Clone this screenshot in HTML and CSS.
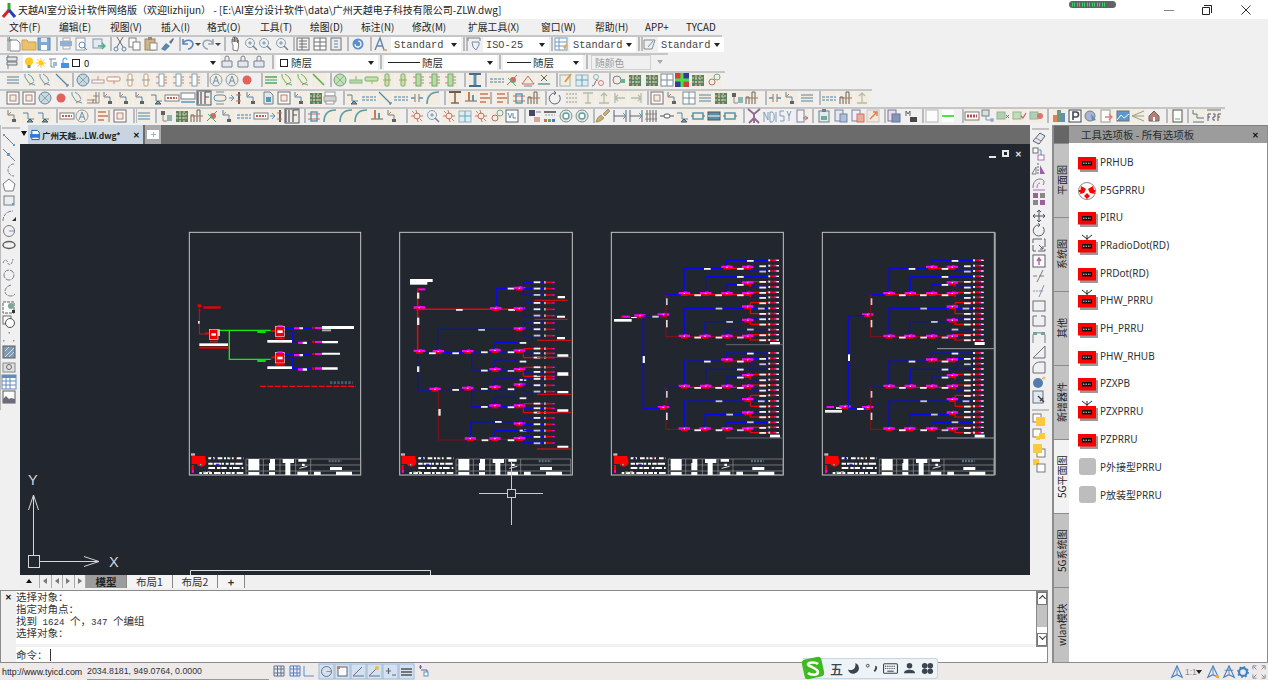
FILE: index.html
```html
<!DOCTYPE html>
<html lang="zh">
<head>
<meta charset="utf-8">
<title>天越AI室分设计软件网络版</title>
<link rel="stylesheet" href="styles.css">
</head>
<body>
<svg class="defs" aria-hidden="true">
<defs>
<rect id="T" x="-7" y="-7" width="14" height="14" fill="#f3eddd"/>
<path id="s" d="M0-7V7" stroke="#a0a0a0" stroke-width="1.6"/>
<g id="new" fill="none"><path d="M-4-4h7l3 3v8h-10z" fill="#fff" stroke="#707070"/><path d="M-7-4h5M-4.500-7v5" stroke="#2c9a78"/></g>
<path id="open" d="M-7-4h5l1 2h8v8h-14z" fill="#eab94e" stroke="#bf9232"/>
<g id="save"><rect x="-6" y="-6" width="12" height="12" fill="#6b9bcb" stroke="#40709f"/><rect x="-3" y="-6" width="6" height="4" fill="#e0ebf4"/><rect x="-3" y="1" width="6" height="5" fill="#fff"/></g>
<g id="print"><rect x="-3" y="-6" width="7" height="3" fill="#fff" stroke="#999"/><rect x="-6" y="-3" width="12" height="5" fill="#7aa5cf"/><rect x="-3" y="2" width="7" height="3" fill="#fff" stroke="#999"/></g>
<g id="prev" fill="none"><rect x="-5" y="-6" width="9" height="12" fill="#fff" stroke="#7a8a9a"/><circle cx="1" cy="1" r="3" stroke="#4a7ea8"/><path d="M3 3l3 3" stroke="#4a7ea8"/></g>
<g id="pub" fill="none"><rect x="-6" y="-5" width="9" height="9" fill="#dfe8f0" stroke="#6a8aa8"/><path d="M-1 2h6M3-1l3 3-3 3" stroke="#2c9a78" stroke-width="1.400"/></g>
<g id="cut" fill="none" stroke="#4a4a5a"><path d="M-3-7L3 3M3-7L-3 3"/><circle cx="-4" cy="5" r="2" stroke="#3a6f9f"/><circle cx="4" cy="5" r="2" stroke="#3a6f9f"/></g>
<g id="copy" fill="#fff" stroke="#666"><rect x="-6" y="-6" width="7" height="9"/><rect x="-2" y="-2" width="7" height="8"/></g>
<g id="paste"><rect x="-6" y="-5" width="10" height="11" fill="#c9a66a" stroke="#8a7040"/><rect x="-3" y="-7" width="4" height="3" fill="#777"/><rect x="-1" y="-1" width="7" height="7" fill="#fff" stroke="#777"/></g>
<g id="brush"><path d="M-6 5l5-6 4 3-5 5z" fill="#3a6f9f"/><path d="M2-2l4-4 1 1-3 5z" fill="#556"/></g>
<g id="undo" fill="none" stroke="#3a6fb0" stroke-width="1.600"><path d="M-5-5v5h5M-5 0c2-5 9-5 10 0 0 3-3 5-5 5"/></g>
<g id="redo" fill="none" stroke="#8a98a8" stroke-width="1.600"><path d="M5-5v5h-5M5 0c-2-5-9-5-10 0 0 3 3 5 5 5"/></g>
<path id="dd" d="M-3-1h6l-3 3z" fill="#222"/>
<path id="pan" d="M-3 6v-5l-1-2v-4h1v3-5h1.500v5-5h1.500v5-4h1.500v5-3h1v7l-1 4z" fill="#fff" stroke="#444" stroke-width=".8"/>
<g id="zm" fill="none" stroke="#7a8a98"><circle cx="-1" cy="-1" r="4.500"/><path d="M2 2l4 4" stroke="#5a6a78" stroke-width="1.500"/><path d="M-3-1h4M-1-3v4" stroke="#4a88b8"/></g>
<g id="pr1"><rect x="-6" y="-6" width="12" height="12" fill="#f4f4f4" stroke="#555"/><path d="M-4-3h8M-4 0h8M-4 3h8M-1-6v12" stroke="#555" fill="none"/></g>
<g id="pr2"><rect x="-6" y="-6" width="12" height="12" fill="#fff" stroke="#555"/><path d="M-6-2h12M0-6v12M-6 2h12" stroke="#555" fill="none"/></g>
<g id="pr3"><rect x="-5" y="-6" width="10" height="12" fill="#eee" stroke="#555"/><path d="M-2-3h4M-2 0h4M-2 3h4" stroke="#3a6f9f" fill="none"/></g>
<g id="help"><circle r="5.500" fill="#3d7cc4"/><circle r="3" fill="none" stroke="#fff" stroke-width="1.200" stroke-dasharray="9 5"/><rect x="-.600" y="2.500" width="1.200" height="1.500" fill="#fff"/></g>
<g id="tstyle" fill="none" stroke="#4b6f96" stroke-width="1.400"><path d="M-6 6L-1-6 3 6M-4 2h6"/><path d="M2 6h4" stroke="#c09040"/></g>
<g id="dimst" fill="none" stroke="#4a7fa8"><path d="M-6-6h12M-6-6v3M6-6v3" stroke="#666"/><path d="M-2-2h7v3l-3 5-3-3z" stroke="#5a78a0"/></g>
<g id="tabst" fill="#fff"><rect x="-6" y="-6" width="12" height="12" stroke="#5a88b8"/><path d="M-6-2h12M-6 2h12M-2-6v12" stroke="#5a88b8" fill="none"/><path d="M2 3l4-4v3l-2 4z" fill="#d4a040"/></g>
<g id="mlst" fill="none" stroke="#777"><path d="M-6-4h11l-3 9h-8z"/><path d="M-2 3l5-6" stroke="#4a7fa8"/></g>
<path id="layer" d="M-6-5h10v4h-10zM-6 0h10v3h-10z" fill="#dfe6ec" stroke="#555"/>
<g id="ltool"><path d="M-5 5V-1h10v6z" fill="#dde7f0" stroke="#667"/><path d="M-2-1v-3a2 2 0 0 1 4 0v3" fill="none" stroke="#667"/></g>

<g id="lin" fill="none"><use href="#T"/><path d="M-6-3h12M-6 0h12M-6 3h12" stroke="#2c6f9c" stroke-width="1.200"/></g>
<g id="ling" fill="none"><use href="#T"/><path d="M-6-3h12M-6 3h12" stroke="#22a22c" stroke-width="1.500"/><path d="M-6 0h12" stroke="#2c6f9c"/></g>
<g id="wav" fill="none"><use href="#T"/><path d="M-5-6v3l4 6 6 2M-2-6l4 3 2 4" stroke="#3e8ba8"/><path d="M-1 5l5-3" stroke="#777"/></g>
<g id="wavg" fill="none"><use href="#T"/><path d="M-5-6v3l4 6 6 2M-2-6l4 3 2 4" stroke="#4aa838"/><path d="M-1 5l5-3" stroke="#777"/></g>
<g id="dia" fill="none"><use href="#T"/><path d="M-6-6L5 5" stroke="#2f6f9f" stroke-width="1.300"/><path d="M4 6h2v-2" stroke="#444"/></g>
<g id="diag" fill="none"><use href="#T"/><path d="M-6-6L5 5" stroke="#3aa02c" stroke-width="1.500"/></g>
<g id="cir" fill="#b6dadb" stroke="#668"><circle r="6"/><path d="M-4-4L4 4M-4 4L4-4" fill="none" stroke="#88a"/></g>
<g id="cirg" fill="#b8e0a8" stroke="#686"><circle r="6"/><path d="M-4-4L4 4M-4 4L4-4" fill="none" stroke="#6a8"/></g>
<g id="ph"><use href="#T"/><rect x="-6" y="0" width="12" height="3" fill="#fff" stroke="#a88"/><path d="M0-4V0" stroke="#a88"/></g>
<g id="pw"><use href="#T"/><rect x="-7" y="-3" width="13" height="4" rx="1" fill="#fff" stroke="#c07a5a"/><path d="M0 1v3" stroke="#68a"/></g>
<g id="pv"><use href="#T"/><rect x="-2" y="-6" width="4" height="12" rx="1" fill="#fff" stroke="#c08a5a"/><path d="M-4 0h8" stroke="#789"/></g>
<g id="pp"><use href="#T"/><rect x="-3" y="-6" width="5" height="12" fill="#fff" stroke="#6a94a8"/><path d="M-6-3h3M-6 3h3M2-3h3M2 0h3M2 3h3" stroke="#c46a5a"/></g>
<g id="phg"><use href="#T"/><rect x="-6" y="0" width="12" height="3" fill="#a8d898" stroke="#7a7"/><path d="M0-4V0" stroke="#7a7"/></g>
<g id="pwg"><use href="#T"/><rect x="-7" y="-3" width="13" height="4" rx="1" fill="#b8e0a0" stroke="#6aa048"/><path d="M0 1v3" stroke="#6a8"/></g>
<g id="pvg"><use href="#T"/><rect x="-2" y="-6" width="4" height="12" rx="1" fill="#b8e0a0" stroke="#6aa048"/><path d="M-4 0h8" stroke="#a85"/></g>
<g id="ppg"><use href="#T"/><rect x="-3" y="-6" width="5" height="12" fill="#a8d898" stroke="#5a9a48"/><path d="M-6-3h3M-6 3h3M2-3h3M2 0h3M2 3h3" stroke="#c46a5a"/></g>
<g id="ac" fill="none"><use href="#T"/><circle r="6" stroke="#7a8ca0"/><path d="M-3 4L0-4 3 4M-2 1h4" stroke="#4a7fa8"/></g>
<circle id="rd" r="4.500" fill="#e0453a"/>
<g id="tee" fill="none"><use href="#T"/><path d="M-6-6h12M-6 6h12" stroke="#22507a" stroke-width="2"/><path d="M0-5V5" stroke="#3b7ca8" stroke-width="3"/></g>
<g id="dsh" fill="none"><use href="#T"/><path d="M-7-1h14M-7 2h14" stroke="#2a6a9a" stroke-width="1.200" stroke-dasharray="3 1"/></g>
<g id="spl" fill="none"><use href="#T"/><path d="M-6 5L4-5" stroke="#666"/><circle cx="0" cy="0" r="3" fill="#c0524a"/><path d="M-5-2l8 8" stroke="#3a7"/></g>
<g id="tri" fill="none"><use href="#T"/><path d="M-6 4L0-4 6 4z" stroke="#c0524a"/><path d="M-4 6h8" stroke="#579"/></g>
<g id="xb" fill="none"><use href="#T"/><path d="M-3-5L3 1M3-5L-3 1" stroke="#444"/><path d="M-6 4h12" stroke="#3a8a9a" stroke-width="1.500"/></g>
<g id="ed" fill="none"><use href="#T"/><rect x="-6" y="-5" width="10" height="11" stroke="#8aa"/><path d="M-1 2L5-6" stroke="#d88a28" stroke-width="2"/></g>
<g id="pg" fill="none"><use href="#T"/><rect x="-6" y="-5" width="12" height="11" fill="#dfeaf2" stroke="#8aa4b8"/><path d="M-6 0h12M0-5v11" stroke="#39a"/></g>
<g id="ch" fill="none" stroke="#555"><circle cx="-2" cy="-3" r="2.500" stroke="#7a9"/><circle cx="3" cy="3" r="2.500" stroke="#c65"/><path d="M-6 6c4 0 2-6 6-6"/></g>
<g id="oo" fill="none"><use href="#T"/><circle cx="-2" cy="0" r="4" stroke="#568"/><rect x="2" y="-1" width="4" height="4" fill="#4a7"/></g>
<g id="gr"><use href="#T"/><rect x="-6" y="-5" width="12" height="11" fill="#3c6a42"/><path d="M-6-2h12M-6 2h12M-2-5v11M2-5v11" stroke="#e0d0a0" stroke-dasharray="2 1"/></g>
<g id="win"><use href="#T"/><rect x="-6" y="-6" width="12" height="12" fill="#fff" stroke="#5a7a8a"/><path d="M-6 0h12M0-6v12" stroke="#5a7a8a"/></g>
<g id="cm"><rect x="-7" y="-7" width="14" height="14" fill="#11118c"/><rect x="-7" y="-7" width="7" height="7" fill="#d01818"/><rect x="0" y="0" width="7" height="7" fill="#d01818"/><path d="M-7 0h14M0-7v14" stroke="#2d2" stroke-width="3"/></g>
<g id="sta" fill="none"><use href="#T"/><path d="M-6 5h12V-6M-6 2h9M0-2h6" stroke="#b06a3a"/><path d="M3-6v11M0 1v4" stroke="#3a6a9a"/></g>
<g id="flo" fill="none"><use href="#T"/><path d="M-5-6v5h6v5" stroke="#3a6a9a"/><rect x="-1" y="3" width="4" height="3" fill="#444"/><path d="M-5-1L-2-4" stroke="#c46a3a"/></g>
<g id="flg" fill="none"><use href="#T"/><path d="M-6-3h5v6h6" stroke="#3a6a9a"/><path d="M-2 6l3-3 3 3z" fill="#3aa0b0" stroke="#333"/></g>
<g id="rb"><use href="#T"/><rect x="-7" y="-3" width="14" height="6" fill="#fff" stroke="#666"/><path d="M-5 0h10" stroke="#c03a2a" stroke-width="2" stroke-dasharray="2 1"/></g>
<g id="sc"><use href="#T"/><rect x="-7" y="-5" width="14" height="6" fill="#fff" stroke="#567"/><path d="M-7 4h14" stroke="#38a" stroke-width="1.500"/></g>
<g id="bf" fill="none" stroke="#334"><use href="#T"/><path d="M-6-6v12M-3-6v12M1-6v12h0M1-6h5M1-1h4" stroke-width="1.200"/></g>
<g id="cap" fill="none"><use href="#T"/><rect x="-6" y="-3" width="12" height="6" rx="3" stroke="#3a7fa8"/><path d="M-4-6h8M-4 6h8" stroke="#777"/></g>
<g id="ar"><use href="#T"/><path d="M-7 0h5M-5-3l3 3-3 3" fill="none" stroke="#3a7fa8"/><path d="M3-6v12" stroke="#444" stroke-width="2"/><path d="M0-3h5M0 3h5" stroke="#c0524a"/></g>
<g id="doc"><use href="#T"/><path d="M-4-6h6l3 3v9h-9z" fill="#d8e8f0" stroke="#666"/><rect x="-2" y="-1" width="5" height="5" fill="#38a"/></g>
<g id="frm"><use href="#T"/><rect x="-6" y="-6" width="12" height="12" fill="#fff" stroke="#555"/><rect x="-3" y="-3" width="6" height="6" fill="#f3eddd" stroke="#a66"/></g>
<g id="st2"><use href="#T"/><path d="M-6 6V-1h3v7M0 6V-6h3v12" fill="none" stroke="#444"/><path d="M-6 0h12" stroke="#a8552a"/></g>
<g id="prn"><rect x="-5" y="-6" width="10" height="4" fill="#fff" stroke="#888"/><rect x="-6" y="-2" width="12" height="6" rx="1" fill="#ccc" stroke="#888"/><rect x="-4" y="3" width="8" height="3" fill="#fff" stroke="#888"/></g>
<g id="bk" fill="none"><use href="#T"/><path d="M-6 0h4M2 0h4" stroke="#3a7fa8" stroke-width="1.500"/><path d="M-2-4v8M2-4v8" stroke="#666"/></g>
<g id="arc" fill="none"><use href="#T"/><path d="M-6 6C-6-2-2-6 6-6" stroke="#3a8a9a" stroke-width="1.600"/></g>
<g id="tb" fill="none"><use href="#T"/><path d="M-6-6h12" stroke="#5a3a2a" stroke-width="2"/><path d="M0-5V5M-4 5h8" stroke="#7a4a2a" stroke-width="1.600"/></g>
<g id="tp" fill="none"><use href="#T"/><path d="M-5-5h10M0-5V5M-3 5h6" stroke="#a4b4a0" stroke-width="1.300"/></g>
<g id="tq" fill="none"><use href="#T"/><path d="M-5 5h10M0-5V5M-3-2l3-3 3 3" stroke="#a4b4a0" stroke-width="1.300"/></g>
<g id="tr1" fill="none"><use href="#T"/><path d="M-5-5V5M-5 0H5M-2-3l-3 3 3 3" stroke="#a4b4a0" stroke-width="1.300"/></g>
<g id="tr2" fill="none"><use href="#T"/><path d="M5-5V5M-5 0H5M2-3l3 3-3 3" stroke="#a4b4a0" stroke-width="1.300"/></g>
<g id="dgr" fill="none"><use href="#T"/><path d="M-6-4h12M-6 0h12M-6 4h12" stroke="#7a8a90" stroke-dasharray="2 1"/></g>
<g id="hb"><use href="#T"/><path d="M-6 3h12" stroke="#444"/><rect x="-3" y="-6" width="2" height="9" fill="#c4603a"/><rect x="1" y="-3" width="2" height="6" fill="#3a8a9a"/></g>
<g id="wh"><use href="#T"/><path d="M-6-4h8M-6 0h10M-6 4h6" stroke="#c4603a" stroke-width="1.300"/><path d="M5-6v12" stroke="#666"/></g>
<g id="sw"><use href="#T"/><path d="M-6-2h12M-6 3h12" stroke="#c0524a"/><rect x="-3" y="-4" width="6" height="9" fill="none" stroke="#3a7fa8" stroke-width="1.400"/></g>
<g id="blk"><use href="#T"/><rect x="-5" y="-5" width="4" height="4" fill="#444"/><rect x="1" y="-1" width="5" height="6" fill="#7aa"/><path d="M-3-1v6h4" fill="none" stroke="#777"/></g>
<g id="rng"><circle r="6" fill="#d8ebe5" stroke="#777"/><circle r="3" fill="#fff" stroke="#4a8a8a" stroke-width="1.400"/></g>
<g id="fan"><use href="#T"/><path d="M-6 0h3M3 0h3M-1-6l1 4M1 6l-1-4" stroke="#a66"/><circle r="3" fill="none" stroke="#c0524a"/><path d="M-5-5l2 2M3 3l2 2" stroke="#3a8"/></g>
<g id="lnk"><use href="#T"/><circle cx="-2" cy="2" r="3" fill="none" stroke="#a55"/><circle cx="3" cy="-3" r="3" fill="none" stroke="#597"/></g>
<g id="vb"><rect x="-6" y="-6" width="12" height="12" fill="#fff" stroke="#445"/><path d="M-4-3l2 5 2-5M1-3v5h3" fill="none" stroke="#3a7fa8"/></g>
<g id="fl1"><rect x="-6" y="-6" width="6" height="6" fill="#224"/><rect x="-1" y="1" width="6" height="5" fill="#c98"/><path d="M1-4h5" stroke="#666"/></g>
<g id="fl2"><rect x="-6" y="-5" width="12" height="2" fill="#555"/><path d="M-5-1h10" stroke="#888" stroke-dasharray="2 1"/><rect x="-6" y="3" width="3" height="3" fill="#c4502a"/><rect x="-2" y="3" width="3" height="3" fill="#2aa048"/><rect x="2" y="3" width="3" height="3" fill="#2a62c4"/></g>
<path id="bro" d="M-7 6c1-4 3-6 5-7l3 3c-2 2-4 4-8 4zM0-2l5-5 2 2-5 5z" fill="#c8a040" stroke="#555" stroke-width=".6"/>
<g id="mk" fill="none" stroke="#445"><path d="M-6-6v12M6-6v12M-6 0h12"/><path d="M3-3l3 3-3 3" stroke="#38a"/></g>
<g id="mkc" fill="none"><path d="M-7 0h4M3 0h4" stroke="#333"/><rect x="-3" y="-2" width="6" height="4" rx="2" fill="#fff" stroke="#333"/></g>
<g id="lad" fill="none"><path d="M-6-2h12M-6 3h12" stroke="#a85"/><path d="M-4-6v12M-1-6v12M2-6v12M5-6v12" stroke="#445"/></g>
<g id="bx" fill="none"><use href="#T"/><rect x="-5" y="-3" width="10" height="6" stroke="#2a7a9a" stroke-width="1.400"/><path d="M-7 0h2M5 0h2" stroke="#444"/></g>
<g id="bxf"><use href="#T"/><rect x="-6" y="-4" width="12" height="8" fill="#3a7aa0" stroke="#333"/><path d="M-6 0h12" stroke="#fff"/></g>
<g id="yy" fill="none" stroke="#a98"><path d="M0-2V7M0-2L-6-7M0-2L6-7M0 2L-5 7M0 2L5 7" stroke="#7a4a7a" stroke-width="1.800"/></g>
<g id="nd"><path d="M-6 6V-4l4 8V-4M0-4v10h2c3 0 3-10 0-10h-2M6-4v10" fill="none" stroke="#6a8ab0"/></g>
<g id="sy"><path d="M-2-5h-4v5h4v5h-4M1-5l2 5 2-5M3 0v5" fill="none" stroke="#6a8ab0"/></g>
<g id="dc"><use href="#T"/><rect x="-5" y="-6" width="7" height="12" fill="#f4f4f4" stroke="#66a"/><path d="M1 2h5M3 0l3 2-3 2" fill="none" stroke="#a54"/></g>
<g id="cp"><use href="#T"/><rect x="-5" y="-5" width="10" height="11" fill="#dceaf2" stroke="#4a6a7a"/><rect x="-2" y="-7" width="4" height="3" fill="#567"/><rect x="-3" y="0" width="6" height="4" fill="#5a9a8a"/></g>
<g id="cp2"><rect x="-6" y="-6" width="8" height="11" fill="#e0e8f0" stroke="#668"/><rect x="-1" y="-2" width="7" height="8" fill="#9ab8d8" stroke="#668"/></g>
<g id="cp3"><rect x="-6" y="-6" width="8" height="11" fill="#eef" stroke="#668"/><rect x="-1" y="-2" width="7" height="8" fill="#e8a088" stroke="#c54"/></g>
<g id="cp4"><rect x="-6" y="-6" width="12" height="12" fill="#eee8d8" stroke="#bbb"/><path d="M-3 3l6-6M0-4h4v4" fill="none" stroke="#e0602a" stroke-width="1.400"/></g>
<g id="cp5"><rect x="-6" y="-6" width="8" height="11" fill="#e8d8ee" stroke="#658"/><rect x="-2" y="-2" width="8" height="8" fill="#68a" stroke="#558"/></g>
<g id="mt"><path d="M-5 0V-5l2 3 2-3v5" fill="none" stroke="#444"/><rect x="-1" y="1" width="7" height="5" fill="#222"/></g>
<rect id="wb" x="-6" y="-6" width="12" height="12" fill="#fff" stroke="#aaa"/>
<g id="gl"><rect x="-6" y="-6" width="12" height="12" fill="#fff"/><path d="M-6 0h12" stroke="#1fe61f" stroke-width="2"/></g>
<g id="rtx"><use href="#T"/><rect x="-7" y="-4" width="14" height="8" fill="#fff" stroke="#666"/><path d="M-5 0h10" stroke="#b02a2a" stroke-width="3" stroke-dasharray="2 1"/></g>
<g id="tl"><rect x="-6" y="-6" width="7" height="6" fill="#cfe0d8" stroke="#666"/><path d="M-2 0v4h5" fill="none" stroke="#68a"/><circle cx="4" cy="4" r="2" fill="#88a0b8"/></g>
<g id="tx"><use href="#T"/><rect x="-6" y="-4" width="8" height="7" fill="#a8c8a0" stroke="#7a9"/><path d="M3-1l3 3M6-1l-3 3" stroke="#555"/></g>
<g id="tv"><use href="#T"/><rect x="-6" y="-4" width="8" height="7" fill="#bcd8a0" stroke="#7a9"/><path d="M2 0l2 2 3-5" fill="none" stroke="#c44" stroke-width="1.200"/></g>
<g id="td"><use href="#T"/><rect x="-6" y="-4" width="8" height="7" fill="#a8c8a0" stroke="#7a9"/><circle cx="4" cy="0" r="3" fill="#d85a5a"/></g>
<g id="bld"><use href="#T"/><rect x="-6" y="-1" width="4" height="7" fill="#d86a3a"/><rect x="-2" y="-6" width="4" height="12" fill="#4a8a6a"/><rect x="2" y="-3" width="4" height="9" fill="#4a78a8"/></g>
<g id="pk"><rect x="-6" y="-6" width="12" height="12" fill="#fff" stroke="#222"/><path d="M-2 4V-4h3a2 2 0 0 1 0 5h-3" fill="none" stroke="#223" stroke-width="1.600"/></g>
<g id="glb"><use href="#T"/><circle cx="-1" cy="0" r="5" fill="#9ac" stroke="#567"/><path d="M0-2l5 6-4 1z" fill="#3a7aa8"/></g>
<g id="npg"><use href="#T"/><rect x="-5" y="-6" width="9" height="12" fill="#fff" stroke="#888"/><path d="M-1 1h6M3-2l3 3-3 3" fill="none" stroke="#d46a5a" stroke-width="1.300"/></g>
<g id="bl2"><use href="#T"/><rect x="-6" y="-5" width="12" height="10" fill="#3a88c8" stroke="#555"/><path d="M-6 4l4-5 3 3 5-4" fill="none" stroke="#fff"/></g>
<g id="tre" fill="none"><use href="#T"/><path d="M-6 0L6-5M-6 0L6 5M-6 0h12" stroke="#8a8a72"/></g>
<g id="hse"><path d="M-5 0L0-5 5 0v5h-10z" fill="#a46a5a" stroke="#544"/><rect x="-1" y="1" width="2" height="4" fill="#fff"/></g>
<g id="tab"><use href="#T"/><rect x="-4" y="-6" width="9" height="12" fill="#fff" stroke="#333"/><path d="M-2 3h5" stroke="#2a9"/></g>
<g id="ste" fill="none"><use href="#T"/><path d="M-5-6v4h4v4h7M-5 6h11" stroke="#3a5a7a"/></g>
<g id="fsf"><use href="#T"/><path d="M-7-6h14" stroke="#555"/><path d="M-6 5V-2h3M-6 1h2M-1-2h2v3h-2v3h2M4 5V-2h3M4 1h2" fill="none" stroke="#336"/></g>

<g id="ln" fill="none"><path d="M-5-5L5 5" stroke="#667"/><rect x="-6" y="-6" width="2" height="2" fill="#4a88c8"/><rect x="4" y="4" width="2" height="2" fill="#4a88c8"/></g>
<g id="xl" fill="none"><path d="M-6-6L6 6" stroke="#667"/><rect x="-2" y="-2" width="3" height="3" fill="#4a88c8"/></g>
<path id="pl" d="M5-6a5 5 0 1 0 0 12" fill="none" stroke="#667" stroke-dasharray="3 1"/>
<path id="pg5" d="M0-6l6 5-2 7h-8l-2-7z" fill="#fff" stroke="#667"/>
<g id="rc"><rect x="-5" y="-4" width="10" height="9" fill="#e8eef2" stroke="#667"/><rect x="3" y="3" width="2" height="2" fill="#4a88c8"/></g>
<g id="ra" fill="none"><path d="M-6 6c0-6 4-10 10-10" stroke="#667" stroke-dasharray="4 1"/><path d="M3 6h4V2z" fill="#111"/></g>
<g id="cl" fill="none"><circle r="5.500" stroke="#667"/><path d="M0 0h5" stroke="#4a88c8"/></g>
<ellipse id="el" rx="6" ry="3.500" fill="none" stroke="#444" stroke-width="1.400"/>
<path id="sp" d="M-6 3c2-5 4-3 5 0s4 2 5-4" fill="none" stroke="#667" stroke-dasharray="3 1"/>
<circle id="ci" r="5" fill="none" stroke="#667" stroke-dasharray="5 1"/>
<path id="ea" d="M2-6c-8 2-8 11 0 11 2 0 3-1 4-2" fill="none" stroke="#667" stroke-dasharray="4 1"/>
<g id="bi"><rect x="-6" y="-5" width="11" height="11" fill="#fff" stroke="#444" stroke-dasharray="3 1"/><circle cx="2" cy="-1" r="3" fill="#6a9a8a"/><path d="M3 3h3v3h-3z" fill="#111"/></g>
<g id="bm" fill="none"><rect x="-6" y="-6" width="8" height="8" fill="#fff" stroke="#555"/><circle cx="1" cy="1" r="4.500" fill="#fff" stroke="#333"/></g>
<g id="pt"><rect x="-.500" y="-5" width="1.500" height="1.500" fill="#5a8ab8"/><rect x="-6" y="3" width="1.500" height="1.500" fill="#5a8ab8"/><rect x="4" y="3" width="1.500" height="1.500" fill="#5a8ab8"/></g>
<g id="ht"><rect x="-6" y="-6" width="12" height="12" fill="#6c8ca8" stroke="#444"/><path d="M-4-1L0-5M-4 5L5-4M0 5l5-5" stroke="#c8d8e0"/></g>
<g id="rg"><rect x="-6" y="-4" width="12" height="9" fill="#ddd" stroke="#777"/><circle cy="0" r="2.500" fill="none" stroke="#555"/></g>
<g id="tb2"><rect x="-7" y="-7" width="14" height="14" fill="#fff" stroke="#4a7ab0"/><rect x="-7" y="-7" width="14" height="3" fill="#4a7ab0"/><path d="M-7-1h14M-7 3h14M-3-4v11M1-4v11" stroke="#4a7ab0"/></g>
<g id="im"><rect x="-6" y="-6" width="12" height="12" fill="#fff" stroke="#444"/><path d="M-6 2l3-3 3 3 2-1 4 1v4h-12z" fill="#556"/></g>
<g id="er"><path d="M-6 3L1-5l5 3-6 8z" fill="#dfe8f0" stroke="#445"/><path d="M-3 0l5 3" stroke="#c4507a"/></g>
<g id="cy"><rect x="-6" y="-6" width="5" height="5" fill="#fff" stroke="#556"/><path d="M0-4h2v5" fill="none" stroke="#38a"/><rect x="-1" y="1" width="6" height="5" fill="#fff" stroke="#a05aa0"/></g>
<g id="mr"><path d="M-1-6V6" stroke="#555" stroke-dasharray="2 1"/><path d="M-3-2v7h-4zM1-4l5 9h-5z" fill="#8a4a9a"/><path d="M-3-2v7h-4z" fill="#fff" stroke="#667"/></g>
<g id="of" fill="none" stroke="#667"><path d="M-6 4c0-6 3-9 7-9s5 3 3 6"/><path d="M-6 6h12" stroke="#a05aa0"/><path d="M-2 4c0-3 1-5 3-5" stroke="#a05aa0"/></g>
<g id="arr" fill="#8a4a8a"><rect x="-6" y="-6" width="5" height="5"/><rect x="1" y="-6" width="5" height="5" fill="#777"/><rect x="-6" y="1" width="5" height="5" fill="#777"/><rect x="1" y="1" width="5" height="5"/></g>
<path id="mv" d="M0-6v12M-6 0h12M-2-4l2-2 2 2M-2 4l2 2 2-2M-4-2l-2 2 2 2M4-2l2 2-2 2" fill="none" stroke="#334"/>
<g id="rt" fill="none" stroke="#445"><path d="M4-3A5.500 5.500 0 1 1 0-5"/><path d="M-1-7l2 2-2 2"/></g>
<g id="sl"><rect x="-6" y="-6" width="12" height="12" fill="none" stroke="#445" stroke-dasharray="9 2"/><path d="M0 0l4 4M4 1v3H1" fill="none" stroke="#445"/></g>
<g id="se"><rect x="-6" y="-6" width="12" height="12" fill="#fff" stroke="#445"/><path d="M0 4V-2M-2 0l2-3 2 3" fill="none" stroke="#a04a9a" stroke-width="1.400"/></g>
<path id="tr" d="M-6 0h4M0 0h5M4-6L-2 6" fill="none" stroke="#667"/>
<path id="ex" d="M-6 0h2M-3 0h2M0 0h4M5-6L0 6" fill="none" stroke="#8a7aa0"/>
<rect id="b1" x="-6" y="-5" width="12" height="10" fill="none" stroke="#556"/>
<path id="b2" d="M-6-5V5H6V-5H2M-2-5H-6" fill="none" stroke="#556"/>
<g id="jn"><path d="M-6 6V-2c0-3 12-3 12 0v8" fill="none" stroke="#667"/><rect x="-6" y="-5" width="4" height="3" fill="#5a9a8a"/><rect x="2" y="-5" width="4" height="3" fill="#5a9a8a"/></g>
<path id="chm" d="M-6 6H6V-6z" fill="none" stroke="#556"/>
<path id="flt" d="M-6 6H6V-5H1c-4 0-7 3-7 6z" fill="none" stroke="#556"/>
<g id="xp"><circle cx="-1" cy="1" r="5" fill="#3a6aa0"/><path d="M3-3l2-2" stroke="#999"/><circle cx="5" cy="-4" r="1.500" fill="#e8c030"/></g>
<g id="pro"><rect x="-6" y="-6" width="10" height="12" fill="#dce8f0" stroke="#557"/><path d="M-1-1l6 6M1 4l3-3" stroke="#222" stroke-width="1.400"/></g>
<g id="o1"><rect x="-6" y="-6" width="8" height="8" fill="#fff" stroke="#666"/><rect x="-3" y="-3" width="9" height="9" fill="#fcc31e"/></g>
<g id="o2"><rect x="-6" y="-6" width="8" height="8" fill="#fff" stroke="#666"/><rect x="0" y="-2" width="6" height="6" fill="#fcc31e"/><rect x="-3" y="1" width="4" height="4" fill="#fcc31e"/></g>
<g id="o3"><rect x="-2" y="-1" width="8" height="8" fill="#fff" stroke="#666"/><rect x="-6" y="-6" width="9" height="9" fill="#fcc31e"/></g>
<g id="o4"><rect x="-6" y="-6" width="6" height="6" fill="#fcc31e"/><rect x="-2" y="-1" width="8" height="8" fill="#fff" stroke="#666"/></g>
<g id="A" fill="none"><path d="M0-7L-6 6l6-3 6 3z" stroke="#4a82c0" stroke-width="1.300"/><path d="M0-7V3" stroke="#4a82c0"/></g>

<g id="pt-red"><rect x="2" y="2" width="18" height="13" fill="#999"/><rect x="0" y="0" width="18" height="12.500" fill="#f00"/><rect x="4" y="4" width="10" height="4.500" fill="#111"/><path d="M5 6.200h8" stroke="#ddd" stroke-dasharray="1.500 1"/></g>
<g id="pt-ant"><use href="#pt-red"/><path d="M9 0V-5M9-1L4-5M9-1L14-5" stroke="#222" fill="none"/></g>

<g id="n"><path d="M-17-6h15l4-2 10 2h5v7h-34z" fill="#f0f"/><path d="M-10 0H10v6H-10z" fill="#e80000"/><path d="M-2-3h4v3h-4z" fill="#fff"/></g>
<g id="lf"><rect x="0" y="-3.500" width="4" height="7" fill="#fff"/><rect x="4" y="-2.500" width="20" height="5" fill="#e80010"/><rect x="24" y="-2" width="7" height="4" fill="#f0f"/></g>
<g id="lf3"><rect x="0" y="-3" width="6" height="6" fill="#eee"/><rect x="6" y="-2.500" width="18" height="5" fill="#e80010"/><rect x="18" y="-2.500" width="6" height="4" fill="#f0f"/><rect x="24" y="-2" width="8" height="4" fill="#fff"/></g>
<rect id="la" x="-10" y="-3" width="20" height="5.500" fill="#f0f0f0"/>
<rect id="lag" x="-10" y="-3" width="20" height="5.500" fill="#bfc4d8"/>

<g id="t3b"><use href="#n"/><path class="wb" d="M12-19V19M12-19H72M12 0H72M12 19H72"/><use href="#la" x="53" y="-19"/><use href="#la" x="53"/><use href="#lag" x="53" y="19"/><use href="#lf" x="75" y="-19"/><use href="#lf" x="75"/><use href="#lf" x="75" y="19"/></g>
<g id="t3r"><use href="#n"/><path class="wr" d="M12-8V19M12-8H72M12 19H72"/><path class="wb" d="M12 6H72"/><use href="#la" x="53" y="-8"/><use href="#la" x="53" y="6"/><use href="#la" x="53" y="19"/><use href="#lf" x="75" y="-8"/><use href="#lf" x="75" y="6"/><use href="#lf" x="75" y="19"/></g>

<g id="half">
<path class="wb" d="M183 209H238V130H350M302 209V155H490M366 209V178H425M238 335V250H425M300 335V290H425M366 335V314H490M365 130V106H490M436 122H490M436 122V138H490M436 186H490M436 217H490M436 250H490M436 282H490"/>
<path class="wr" d="M366 130H425M238 209H428M436 170V186M436 170H490M436 202V217M436 202H490M436 233V266M436 233H490M436 266H490M436 282V298H490M436 329V345H490M436 329H490"/>
<path class="wd" d="M183 209V335H238M238 335H428"/>
<rect x="183" y="220" width="5" height="20" fill="#c8c8e8"/><rect x="183" y="285" width="5" height="22" fill="#eadada"/>
<use href="#n" x="238" y="207"/><use href="#n" x="302" y="207"/><use href="#n" x="366" y="207"/><use href="#n" x="428" y="207"/>
<use href="#n" x="366" y="128"/><use href="#n" x="428" y="128"/><use href="#n" x="428" y="175"/>
<use href="#n" x="238" y="335"/><use href="#n" x="300" y="335"/><use href="#n" x="366" y="335"/><use href="#n" x="428" y="335"/>
<use href="#n" x="428" y="247"/><use href="#n" x="428" y="287"/>
<use href="#la" x="307" y="132"/><use href="#la" x="406" y="132"/><use href="#la" x="406" y="156"/><use href="#la" x="406" y="180"/><use href="#la" x="278" y="211"/><use href="#la" x="341" y="211"/><use href="#la" x="406" y="211"/><use href="#lag" x="342" y="251"/><use href="#lag" x="374" y="291"/><use href="#la" x="278" y="338"/><use href="#la" x="342" y="338"/><use href="#lag" x="406" y="338"/><use href="#la" x="436" y="108"/><use href="#lag" x="436" y="314"/>
<use href="#la" x="473" y="124"/><use href="#lag" x="473" y="140"/><use href="#la" x="473" y="171"/><use href="#la" x="473" y="188"/><use href="#la" x="473" y="204"/><use href="#la" x="473" y="219"/><use href="#la" x="473" y="235"/><use href="#lag" x="469" y="251"/><use href="#la" x="473" y="267"/><use href="#la" x="473" y="283"/><use href="#la" x="473" y="299"/><use href="#la" x="473" y="331"/><use href="#la" x="473" y="346"/>
<use href="#lf3" x="490" y="106"/><use href="#lf3" x="490" y="122"/><use href="#lf3" x="490" y="138"/><use href="#lf3" x="490" y="154"/><use href="#lf3" x="490" y="170"/><use href="#lf3" x="490" y="186"/><use href="#lf3" x="490" y="202"/><use href="#lf3" x="490" y="217"/><use href="#lf3" x="490" y="233"/><use href="#lf3" x="490" y="250"/><use href="#lf3" x="490" y="266"/><use href="#lf3" x="490" y="282"/><use href="#lf3" x="490" y="298"/><use href="#lf3" x="490" y="314"/><use href="#lf3" x="490" y="329"/><use href="#lf3" x="490" y="345"/>
<rect x="495" y="351" width="30" height="9" fill="#fff"/>
</g>

<g id="tblock">
<rect x="5" y="685" width="12" height="7" fill="#bbb"/>
<path d="M7 693h40v24H7zM7 720h6v23H7z" fill="#f00"/><circle cx="36" cy="710" r="15" fill="#f00"/><circle cx="34" cy="719" r="2.500" fill="#5cc"/>
<path class="st" d="M57 700H162" stroke-dasharray="9 5 5 9 14 5 6 4"/><path class="st" d="M57 716H162" stroke-dasharray="13 3 22 2 7 5 9 4"/><path class="st" d="M57 729H162" stroke-dasharray="20 6 10 3 16 8 8 3"/><path class="st" d="M30 744H162" stroke-dasharray="8 4 14 3 9 6 20 4"/>
<path d="M120 697h8v3h-8zM140 703h6v3h-6z" fill="#e00"/><path d="M65 700h8v3h-8zM80 716h10v3H80z" fill="#00c"/><path d="M8 735h5v8H8z" fill="#f0f"/><path d="M40 739h10v3H40z" fill="#2a2"/><path d="M54 739h10v3H54z" fill="#cc2"/>
<path class="tl" d="M170 702H514M170 720H514M170 738H514M170 750H514M170 702V750M222 702V750M272 702V750M319 702V750M364 702V750M514 702V750"/>
<path d="M177 702h33v34h-33zM177 741h33v9h-33zM242 702h15v34h-15zM239 714h18v22h-18zM239 741h18v9h-18zM280 702h34v12h-34zM288 714h15v36h-15zM327 702h25v8h-25zM338 716h8v7h-8zM324 740h32v10h-32zM374 740h20v10h-20zM422 726h36v9h-36zM440 740h48v10h-48z" fill="#fff"/>
<path d="M418 708h38" stroke="#5c6f7a" stroke-width="8" stroke-dasharray="6 3"/>
<path d="M330 730l24-6" stroke="#ddd" stroke-width="3"/>
</g>
</defs>
</svg>

<div class="app">
  <header class="titlebar">
    <svg class="logo" viewBox="0 0 14 16"><path d="M7 1v7" stroke="#2aa92a" stroke-width="3"/><path d="M7 8L1 15" stroke="#e02020" stroke-width="3"/><path d="M7 8l6 7" stroke="#2a3ec0" stroke-width="3"/></svg>
    <span class="apptitle">天越AI室分设计软件网络版（欢迎lizhijun） - [E:\AI室分设计软件\data\广州天越电子科技有限公司-ZLW.dwg]</span>
    <svg class="pill" viewBox="0 0 47 8"><rect width="47" height="7" rx="3.500" fill="#5f6468"/><path d="M3 3.500h33" stroke="#2fdc5c" stroke-width="4" stroke-dasharray="1 1 1 2"/></svg>
    <svg class="winbtn" viewBox="0 0 12 12"><path d="M1 6.500h10" stroke="#888"/></svg>
    <svg class="winbtn" viewBox="0 0 12 12"><path d="M3 1.500h7.500V9M1.500 3.500h7v7h-7z" fill="#fff" stroke="#222"/></svg>
    <svg class="winbtn" viewBox="0 0 12 12"><path d="M1.500 1.500l9 9M10.500 1.500l-9 9" stroke="#333"/></svg>
  </header>

  <nav class="menubar">
    <span class="m m1">文件(F)</span><span class="m m2">编辑(E)</span><span class="m m3">视图(V)</span><span class="m m4">插入(I)</span><span class="m m5">格式(O)</span><span class="m m6">工具(T)</span><span class="m m7">绘图(D)</span><span class="m m8">标注(N)</span><span class="m m9">修改(M)</span><span class="m m10">扩展工具(X)</span><span class="m m11">窗口(W)</span><span class="m m12">帮助(H)</span><span class="m m13">APP+</span><span class="m m14">TYCAD</span>
  </nav>

  <div class="row r1">
    <svg class="strip w388"><g transform="translate(0 8)"><use href="#s" x="8"/><use href="#new" x="14"/><use href="#open" x="29"/><use href="#save" x="44"/><use href="#s" x="57"/><use href="#print" x="66"/><use href="#prev" x="81"/><use href="#pub" x="99"/><use href="#s" x="111"/><use href="#cut" x="120"/><use href="#copy" x="135"/><use href="#paste" x="151"/><use href="#brush" x="167"/><use href="#s" x="180"/><use href="#undo" x="188"/><use href="#dd" x="198"/><use href="#redo" x="208"/><use href="#dd" x="218"/><use href="#s" x="225"/><use href="#pan" x="236"/><use href="#zm" x="251"/><use href="#zm" x="265"/><use href="#zm" x="282"/><use href="#s" x="294"/><use href="#pr1" x="303"/><use href="#pr2" x="320"/><use href="#pr3" x="336"/><use href="#s" x="348"/><use href="#help" x="358"/><use href="#s" x="371"/><use href="#tstyle" x="381"/></g></svg>
    <span class="combo mono c-std1">Standard</span>
    <svg class="strip w21"><g transform="translate(0 8)"><use href="#s" x="3"/><use href="#s" x="6"/><use href="#dimst" x="13"/></g></svg>
    <span class="combo mono c-iso">ISO-25</span>
    <svg class="strip w20"><g transform="translate(0 8)"><use href="#s" x="3"/><use href="#tabst" x="12"/></g></svg>
    <span class="combo mono c-std2">Standard</span>
    <svg class="strip w22"><g transform="translate(0 8)"><use href="#s" x="3"/><use href="#s" x="6"/><use href="#mlst" x="14"/></g></svg>
    <span class="combo mono c-std2">Standard</span>
  </div>

  <div class="row r2">
    <svg class="strip w23"><g transform="translate(0 8)"><use href="#s" x="8"/><use href="#layer" x="13"/></g></svg>
    <span class="combo c-layer">
      <svg class="lico" viewBox="0 0 10 12"><circle cx="5" cy="4.500" r="4" fill="#ffc91e"/><rect x="3.500" y="8" width="3" height="3" fill="#888"/></svg>
      <svg class="lico" viewBox="0 0 10 12"><circle cx="5" cy="6" r="2.500" fill="#ffc91e"/><path d="M5 1v10M0 6h10M1.500 2.500l7 7M8.500 2.500l-7 7" stroke="#ffc91e"/></svg>
      <svg class="lico" viewBox="0 0 10 12"><path d="M1 2h7M3 2v8h4" fill="none" stroke="#888"/><rect x="5" y="5" width="4" height="4" fill="#9bd"/></svg>
      <svg class="lico" viewBox="0 0 10 12"><rect x="1" y="6" width="8" height="5" fill="#3f93e8"/><path d="M3 6V3a2 2 0 0 1 4 0" fill="none" stroke="#3f93e8"/></svg>
      <i class="colorbox"></i><span class="zero">0</span>
    </span>
    <svg class="strip w56"><g transform="translate(0 8)"><use href="#ltool" x="7"/><use href="#ltool" x="23"/><use href="#ltool" x="39"/><use href="#s" x="53"/></g></svg>
    <span class="combo c-color"><i class="colorbox"></i>随层</span>
    <svg class="strip w6"><g transform="translate(0 8)"><use href="#s" x="3"/></g></svg>
    <span class="combo c-ltype"><i class="ltline"></i>随层</span>
    <svg class="strip w6"><g transform="translate(0 8)"><use href="#s" x="3"/></g></svg>
    <span class="combo c-lw"><i class="ltline short"></i>随层</span>
    <svg class="strip w8"><g transform="translate(0 8)"><use href="#s" x="4"/></g></svg>
    <span class="combo c-dis">随颜色</span>
    <span class="disarrow"></span>
  </div>

  <div class="row r3">
    <svg class="strip wrow"><g transform="translate(0 8)"><use href="#s" x="8"/><use href="#lin" x="13"/><use href="#wav" x="30"/><use href="#wav" x="45"/><use href="#dia" x="62"/><use href="#s" x="73"/><use href="#cir" x="83"/><use href="#ph" x="98"/><use href="#pw" x="114"/><use href="#pv" x="130"/><use href="#pv" x="146"/><use href="#pp" x="162"/><use href="#pp" x="179"/><use href="#pp" x="195"/><use href="#s" x="208"/><use href="#ac" x="216"/><use href="#ac" x="232"/><use href="#rd" x="247"/><use href="#s" x="262"/><use href="#ling" x="271"/><use href="#wavg" x="287"/><use href="#wavg" x="303"/><use href="#diag" x="319"/><use href="#s" x="331"/><use href="#cirg" x="340"/><use href="#phg" x="356"/><use href="#pwg" x="372"/><use href="#pvg" x="387"/><use href="#pvg" x="403"/><use href="#ppg" x="419"/><use href="#ppg" x="435"/><use href="#ppg" x="451"/><use href="#s" x="465"/><use href="#tee" x="475"/><use href="#s" x="486"/><use href="#dsh" x="497"/><use href="#spl" x="513"/><use href="#tri" x="528"/><use href="#xb" x="544"/><use href="#s" x="557"/><use href="#ed" x="566"/><use href="#pg" x="582"/><use href="#ch" x="598"/><use href="#s" x="610"/><use href="#oo" x="619"/><use href="#gr" x="635"/><use href="#gr" x="652"/><use href="#win" x="667"/><use href="#cm" x="682"/><use href="#gr" x="698"/><use href="#lnk" x="714"/></g></svg>
  </div>

  <div class="row r4">
    <svg class="strip wrow"><g transform="translate(0 8)"><use href="#s" x="8"/><use href="#frm" x="13"/><use href="#frm" x="29"/><use href="#cir" x="45"/><use href="#rd" x="61"/><use href="#wav" x="77"/><use href="#sta" x="93"/><use href="#flo" x="109"/><use href="#flo" x="125"/><use href="#flo" x="141"/><use href="#flg" x="157"/><use href="#rb" x="172"/><use href="#sc" x="188"/><use href="#bf" x="204"/><use href="#cap" x="220"/><use href="#ar" x="236"/><use href="#flo" x="252"/><use href="#doc" x="268"/><use href="#frm" x="284"/><use href="#flo" x="300"/><use href="#gr" x="316"/><use href="#prn" x="330"/><use href="#s" x="344"/><use href="#flg" x="353"/><use href="#dsh" x="369"/><use href="#dia" x="385"/><use href="#dsh" x="401"/><use href="#bk" x="417"/><use href="#arc" x="433"/><use href="#s" x="445"/><use href="#tb" x="455"/><use href="#hb" x="471"/><use href="#wh" x="486"/><use href="#wh" x="503"/><use href="#sw" x="519"/><use href="#st2" x="534"/><use href="#s" x="546"/><use href="#rt" x="555"/><use href="#dgr" x="572"/><use href="#tp" x="588"/><use href="#tq" x="604"/><use href="#tr1" x="620"/><use href="#tr2" x="636"/><use href="#s" x="648"/><use href="#frm" x="657"/><use href="#flo" x="673"/><use href="#win" x="689"/><use href="#lin" x="705"/><use href="#gr" x="721"/><use href="#blk" x="737"/><use href="#st2" x="752"/><use href="#s" x="766"/><use href="#bk" x="775"/><use href="#flo" x="791"/><use href="#lin" x="807"/><use href="#s" x="820"/><use href="#dsh" x="829"/><use href="#st2" x="846"/><use href="#tq" x="862"/></g></svg>
  </div>

  <div class="row r5">
    <svg class="strip wrow"><g transform="translate(0 8)"><use href="#s" x="8"/><use href="#flo" x="13"/><use href="#flg" x="29"/><use href="#flg" x="44"/><use href="#s" x="57"/><use href="#rb" x="67"/><use href="#ac" x="82"/><use href="#s" x="95"/><use href="#wh" x="104"/><use href="#frm" x="120"/><use href="#s" x="134"/><use href="#s" x="137"/><use href="#lin" x="144"/><use href="#s" x="156"/><use href="#blk" x="166"/><use href="#gr" x="182"/><use href="#st2" x="197"/><use href="#spl" x="213"/><use href="#flo" x="228"/><use href="#dsh" x="244"/><use href="#rb" x="261"/><use href="#ar" x="277"/><use href="#bf" x="292"/><use href="#s" x="305"/><use href="#sw" x="314"/><use href="#arc" x="330"/><use href="#arc" x="346"/><use href="#arc" x="361"/><use href="#hb" x="377"/><use href="#flo" x="393"/><use href="#s" x="407"/><use href="#fan" x="417"/><use href="#zm" x="433"/><use href="#fan" x="449"/><use href="#pg" x="465"/><use href="#fan" x="481"/><use href="#lnk" x="497"/><use href="#vb" x="512"/><use href="#s" x="525"/><use href="#fl1" x="535"/><use href="#fl2" x="550"/><use href="#rng" x="566"/><use href="#rng" x="582"/><use href="#s" x="594"/><use href="#bro" x="603"/><use href="#mk" x="620"/><use href="#mk" x="636"/><use href="#lad" x="651"/><use href="#mkc" x="667"/><use href="#flg" x="683"/><use href="#bx" x="698"/><use href="#bxf" x="714"/><use href="#bx" x="730"/><use href="#s" x="744"/><use href="#yy" x="754"/><use href="#nd" x="770"/><use href="#sy" x="786"/><use href="#dc" x="802"/><use href="#s" x="813"/><use href="#cp" x="824"/><use href="#cp2" x="841"/><use href="#cp3" x="858"/><use href="#cp4" x="873"/><use href="#s" x="885"/><use href="#cp5" x="894"/><use href="#mt" x="911"/><use href="#s" x="923"/><use href="#wb" x="932"/><use href="#gl" x="948"/><use href="#s" x="963"/><use href="#rtx" x="972"/><use href="#tl" x="988"/><use href="#tx" x="1003"/><use href="#tv" x="1019"/><use href="#td" x="1036"/><use href="#s" x="1048"/><use href="#bld" x="1059"/><use href="#pk" x="1075"/><use href="#glb" x="1091"/><use href="#npg" x="1106"/><use href="#bl2" x="1123"/><use href="#tre" x="1138"/><use href="#hse" x="1154"/><use href="#s" x="1167"/><use href="#tab" x="1177"/><use href="#s" x="1188"/><use href="#ste" x="1198"/><use href="#fsf" x="1214"/></g></svg>
  </div>

  <main class="body">
    <div class="leftpane">
      <div class="workspace">
        <aside class="sidebar left">
          <svg class="vstrip"><g transform="translate(8 0)"><path d="M-7 3H11" stroke="#bbb" stroke-width="2"/><use href="#ln" y="15"/><use href="#xl" y="30"/><use href="#pl" y="45"/><use href="#pg5" y="60"/><use href="#rc" y="75"/><use href="#ra" y="90"/><use href="#cl" y="106"/><use href="#el" y="120"/><use href="#sp" y="135"/><use href="#ci" y="150"/><use href="#ea" y="166"/><use href="#bi" y="182"/><use href="#bm" y="197"/><use href="#pt" y="212"/><use href="#ht" y="227"/><use href="#rg" y="242"/><use href="#tb2" y="257"/><use href="#im" y="272"/></g></svg>
        </aside>
        <section class="mdi">
          <div class="doctabs">
            <span class="tabdrop"></span>
            <div class="doctab">
              <svg class="docico" viewBox="0 0 12 12"><path d="M2 1h6l2 2v8H2z" fill="#fff" stroke="#224c9c"/><rect x="0" y="5" width="11" height="4" fill="#2a7be0"/></svg>
              <span class="docname">广州天越...LW.dwg*</span>
              <span class="docx">✕</span>
            </div>
            <div class="docplus"><svg viewBox="0 0 12 9"><rect width="12" height="9" fill="#fff"/><path d="M4 4.500h5M6.500 2v5" stroke="#7cc0ea"/></svg></div>
          </div>
          <div class="canvas">
            <div class="mdibtns"><i class="mdimin"></i><i class="mdimax"></i><span class="mdix">✕</span></div>
            <svg class="drawing" viewBox="20 144 1010 431">
              <g class="frame" transform="translate(180 225) scale(.33333)">
                <rect class="fr" x="28" y="22" width="514" height="728"/>
                <use href="#tblock" x="28"/>
                <path d="M58 256V327H90" stroke="#c02020" stroke-width="2.500" fill="none"/>
                <rect x="53" y="238" width="11" height="8" fill="#e00"/><path d="M58 246v10M53 256h10" stroke="#e00" stroke-width="2"/>
                <rect x="70" y="244" width="52" height="7" fill="#e00"/><rect x="54" y="288" width="5" height="8" fill="#eee"/>
                <rect x="75" y="322" width="14" height="6" fill="#e00"/><rect x="88" y="313" width="26" height="31" fill="#ee0000" stroke="#ddd" stroke-width="2"/><rect x="94" y="325" width="14" height="7" fill="#fff"/><rect x="113" y="313" width="7" height="20" fill="#ccc"/>
                <rect x="88" y="347" width="26" height="5" fill="#e00"/>
                <rect x="58" y="355" width="86" height="8" fill="#fff"/><rect x="58" y="365" width="88" height="6" fill="#e80000"/>
                <path d="M120 316H272M148 316V403H272" stroke="#0ef00e" stroke-width="4" fill="none"/>
                <rect x="232" y="316" width="25" height="8" fill="#0ee00e"/><rect x="232" y="403" width="25" height="8" fill="#0ee00e"/>
                <rect x="274" y="315" width="12" height="6" fill="#e00"/><rect x="274" y="394" width="12" height="6" fill="#e00"/>
                <rect x="286" y="304" width="28" height="31" fill="#ee0000" stroke="#ddd" stroke-width="2"/><rect x="292" y="316" width="16" height="8" fill="#fff"/><rect x="292" y="300" width="16" height="5" fill="#f0f"/><rect x="286" y="337" width="28" height="6" fill="#e00"/>
                <rect x="286" y="383" width="28" height="31" fill="#ee0000" stroke="#ddd" stroke-width="2"/><rect x="292" y="395" width="16" height="8" fill="#fff"/><rect x="292" y="379" width="16" height="5" fill="#f0f"/><rect x="286" y="416" width="28" height="6" fill="#e00"/>
                <rect x="262" y="345" width="74" height="8" fill="#fff"/><rect x="262" y="424" width="74" height="8" fill="#fff"/>
                <path class="wb" d="M314 310H400M314 320H338V350H400M314 389H400M314 399H338V430H400"/>
                <path d="M342 307h16v6h-16zM354 350h14v7h-14zM342 387h16v7h-16zM354 430h14v7h-14z" fill="#f0f"/><path d="M358 307h11v6h-11zM368 350h13v7h-13zM358 387h11v7h-11zM368 430h13v7h-13z" fill="#eee"/>
                <path d="M396 305h8v6h-8zM396 347h8v7h-8zM396 384h8v6h-8zM396 427h8v7h-8z" fill="#d00"/>
                <path d="M405 306h21v6h-21zM405 348h21v6h-21zM405 384h21v6h-21zM405 427h21v7h-21z" fill="#f0f"/>
                <path d="M426 303h96v9h-96zM426 348h48v7h-48zM426 383h54v6h-54zM426 427h47v7h-47z" fill="#fff"/><rect x="426" y="313" width="27" height="6" fill="#aaa"/>
                <path d="M240 484H528" stroke="#f01010" stroke-width="4" stroke-dasharray="18 4"/>
                <path d="M450 473H518" stroke="#40606e" stroke-width="8" stroke-dasharray="7 4"/>
              </g>

              <g class="frame" transform="translate(395 225) scale(.33333)">
                <rect class="fr" x="14" y="22" width="518" height="728"/>
                <use href="#tblock" x="13"/>
                <rect x="45" y="162" width="68" height="9" fill="#fff"/><rect x="45" y="171" width="52" height="8" fill="#fff"/>
                <rect x="67" y="190" width="23" height="6" fill="#f0f"/><rect x="67" y="190" width="6" height="5" fill="#e00"/>
                <path class="wr2" d="M68 195V380M68 253H370"/>
                <path class="wb" d="M68 380V495H120M68 380H128V313H370M128 382H218M305 253V190H370M230 381V435H300M218 381H370M300 378V352H370M300 435V405H370M300 435H370M120 494H370M230 492V545H300M300 488V462H370M300 545V517H370M300 545H370"/>
                <path class="wb2" d="M228 643V590H370M300 643V617H370"/>
                <path class="wd" d="M130 500V645H300M300 643H370"/>
                <use href="#n" x="73" y="250"/><use href="#n" x="73" y="380"/><use href="#n" x="302" y="252"/><use href="#n" x="130" y="381"/><use href="#n" x="218" y="381"/><use href="#n" x="300" y="378"/><use href="#n" x="300" y="435"/><use href="#n" x="120" y="494"/><use href="#n" x="218" y="491"/><use href="#n" x="300" y="488"/><use href="#n" x="300" y="544"/><use href="#n" x="226" y="643"/><use href="#n" x="300" y="643"/>
                <rect x="66" y="203" width="7" height="18" fill="#e8e8e8"/><rect x="66" y="278" width="7" height="22" fill="#e8e8e8"/><rect x="66" y="424" width="7" height="17" fill="#e8e8e8"/><rect x="130" y="552" width="7" height="20" fill="#e8e8e8"/>
                <use href="#la" x="193" y="255"/><use href="#la" x="350" y="255"/><use href="#lag" x="260" y="315"/><use href="#la" x="182" y="385"/><use href="#la" x="268" y="382"/><use href="#la" x="348" y="382"/><use href="#la" x="268" y="437"/><use href="#lag" x="348" y="438"/><use href="#la" x="182" y="495"/><use href="#la" x="268" y="492"/><use href="#la" x="348" y="493"/><use href="#la" x="268" y="546"/><use href="#la" x="348" y="547"/><use href="#la" x="310" y="591"/><use href="#la" x="270" y="646"/><use href="#la" x="348" y="646"/><use href="#la" x="348" y="191"/><use href="#la" x="384" y="354"/><use href="#la" x="384" y="410"/><use href="#la" x="384" y="465"/><use href="#la" x="384" y="520"/><use href="#la" x="384" y="617"/><use href="#la" x="112" y="385"/>
                <use href="#t3b" x="373" y="191"/><use href="#t3b" x="373" y="253"/><use href="#t3b" x="373" y="313"/><use href="#t3r" x="373" y="379"/><use href="#t3r" x="373" y="435"/><use href="#t3b" x="373" y="481"/><use href="#t3r" x="373" y="544"/><use href="#t3b" x="373" y="598"/>
                <path class="wb" d="M385 635V653H445M385 635H445"/><use href="#n" x="373" y="642"/><use href="#la" x="426" y="636"/><use href="#lag" x="426" y="655"/><use href="#lf" x="448" y="635"/><use href="#lf" x="448" y="654"/>
                <path d="M418 226H518M418 283H518M426 346H528M426 397H528M426 508H528M426 563H528M426 672H528" stroke="#e81010" stroke-width="3"/><path d="M426 452H528" stroke="#7a1818" stroke-width="3"/>
                <path d="M488 213h22v7h-22zM486 272h24v6h-24zM486 336h24v7h-24zM487 388h33v7h-33zM487 442h33v10h-33zM487 498h33v7h-33zM487 553h33v7h-33zM487 662h33v6h-33z" fill="#fff"/>
              </g>

              <g class="frame" transform="translate(605 225) scale(.33333)">
                <rect class="fr" x="19" y="22" width="516" height="728"/>
                <use href="#tblock" x="20"/>
                <rect x="50" y="272" width="25" height="6" fill="#f0f"/><rect x="47" y="274" width="8" height="4" fill="#e00"/><rect x="27" y="282" width="53" height="8" fill="#fff"/><rect x="78" y="276" width="22" height="3" fill="#fff"/>
                <use href="#n" x="105" y="274"/><use href="#n" x="175" y="271"/><use href="#n" x="175" y="549"/>
                <path class="wb2" d="M115 272H175M115 275V550H165"/><rect x="113" y="393" width="7" height="21" fill="#eee"/><rect x="142" y="272" width="19" height="6" fill="#ccc"/>
                <use href="#half"/><use href="#half" y="278"/>
                <path d="M363 359H535M363 639H535" stroke="#5f6670" stroke-width="3"/>
              </g>

              <g class="frame" transform="translate(815 225) scale(.33333)">
                <rect class="fr" x="22" y="22" width="516" height="728"/>
                <use href="#tblock" x="23"/>
                <path d="M541 22V750" stroke="#9a9a9a" stroke-width="3"/>
                <rect x="35" y="543" width="22" height="6" fill="#f0f"/><rect x="63" y="546" width="20" height="6" fill="#ccc"/><rect x="30" y="555" width="51" height="8" fill="#eee"/>
                <use href="#n" x="90" y="547"/><use href="#n" x="158" y="271"/><use href="#n" x="158" y="549"/>
                <path class="wb" d="M100 547V272H150M100 550H150"/><rect x="99" y="388" width="6" height="20" fill="#fff"/><rect x="126" y="549" width="20" height="6" fill="#fff"/>
                <use href="#half" x="-16"/><use href="#half" x="-16" y="278"/>
                <path d="M366 371H540M366 639H540" stroke="#9aa0a8" stroke-width="3"/>
              </g>

              <path class="paperline" d="M190.500 575V570.500H430.500V575"/>
              <g class="cursor"><path d="M479 493.500H507M515 493.500H543M511.500 462V489M511.500 497V525"/><rect x="507.500" y="489.500" width="8" height="8"/></g>
              <g class="ucs">
                <path d="M33.500 555V495M33.500 495l-5 15M33.500 495l5 15M39 561.500H99M99 561.500l-15-5M99 561.500l-15 5"/>
                <rect x="28.500" y="555.500" width="11" height="12"/>
                <text class="ucst" x="28" y="485">Y</text><text class="ucst" x="109" y="567">X</text>
              </g>
            </svg>
          </div>
          <div class="layouttabs">
            <span class="ltnav up"></span>
            <span class="ltnav first"></span><span class="ltnav prev"></span><span class="ltnav next"></span><span class="ltnav last"></span>
            <span class="lt active">模型</span><span class="lt">布局1</span><span class="lt l2">布局2</span><span class="lt plus">+</span>
          </div>
        </section>
        <aside class="sidebar right">
          <svg class="vstrip"><g transform="translate(9 0)"><path d="M-7 4H10" stroke="#bbb" stroke-width="2"/><use href="#er" y="13"/><use href="#cy" y="29"/><use href="#mr" y="44"/><use href="#of" y="59"/><use href="#arr" y="74"/><use href="#mv" y="91"/><use href="#rt" y="105"/><use href="#sl" y="120"/><use href="#se" y="136"/><use href="#tr" y="151"/><use href="#ex" y="166"/><use href="#b1" y="181"/><use href="#b2" y="196"/><use href="#jn" y="212"/><use href="#chm" y="227"/><use href="#flt" y="242"/><use href="#xp" y="257"/><use href="#pro" y="272"/><path d="M-7 285H10" stroke="#bbb" stroke-width="2"/><use href="#o1" y="295"/><use href="#o2" y="310"/><use href="#o3" y="325"/><use href="#o4" y="340"/></g></svg>
        </aside>
      </div>
      <section class="cmd">
        <div class="cmdx">✕</div>
        <div class="cmdmain">
          <div class="cmdlog">
            <div class="cline">选择对象：</div>
            <div class="cline">指定对角点：</div>
            <div class="cline">找到<span class="ascii"> 1624 </span>个，<span class="ascii">347 </span>个编组</div>
            <div class="cline">选择对象：</div>
          </div>
          <div class="cmdline">命令：<i class="caret"></i></div>
        </div>
        <div class="scroll"><span class="sb up"></span><span class="sbthumb"></span><span class="sbtrack"></span><span class="sb down"></span></div>
      </section>
    </div>

    <aside class="palette">
      <div class="palhead"><span class="palcap"></span><span class="paltitle">工具选项板 - 所有选项板</span><span class="palx">✕</span></div>
      <div class="palbody">
        <div class="paltabs">
          <span class="ptab">平面图</span><span class="ptab">系统图</span><span class="ptab">其他</span><span class="ptab">新增器件</span><span class="ptab active">5G平面图</span><span class="ptab">5G系统图</span><span class="ptab">wlan模块</span>
        </div>
        <ul class="palitems">
          <li><svg class="pico" viewBox="0 -6 20 22"><use href="#pt-red"/></svg>PRHUB</li>
          <li><svg class="pico" viewBox="0 -6 20 22"><circle cx="9" cy="6" r="8.500" fill="#fff" stroke="#888"/><path d="M3 1l5 3-2 4-4 1zM15 1l-5 3 2 4 5 1zM6 11l3-3 3 3-3 3z" fill="#f00"/><path d="M1 6h3M14 6h3" stroke="#f00" stroke-width="2"/></svg>P5GPRRU</li>
          <li><svg class="pico" viewBox="0 -6 20 22"><use href="#pt-red"/></svg>PIRU</li>
          <li><svg class="pico" viewBox="0 -6 20 22"><use href="#pt-ant"/></svg>PRadioDot(RD)</li>
          <li><svg class="pico" viewBox="0 -6 20 22"><use href="#pt-red"/></svg>PRDot(RD)</li>
          <li><svg class="pico" viewBox="0 -6 20 22"><use href="#pt-ant"/></svg>PHW_PRRU</li>
          <li><svg class="pico" viewBox="0 -6 20 22"><use href="#pt-red"/></svg>PH_PRRU</li>
          <li><svg class="pico" viewBox="0 -6 20 22"><use href="#pt-red"/></svg>PHW_RHUB</li>
          <li><svg class="pico" viewBox="0 -6 20 22"><use href="#pt-red"/></svg>PZXPB</li>
          <li><svg class="pico" viewBox="0 -6 20 22"><use href="#pt-ant"/></svg>PZXPRRU</li>
          <li><svg class="pico" viewBox="0 -6 20 22"><use href="#pt-red"/></svg>PZPRRU</li>
          <li><i class="pgrey"></i>P外接型PRRU</li>
          <li><i class="pgrey"></i>P放装型PRRU</li>
        </ul>
      </div>
    </aside>
  </main>

  <footer class="status">
    <span class="url">http://www.tyicd.com</span>
    <span class="coords">2034.8181, 949.0764, 0.0000</span>
    <svg class="strip wstat" viewBox="0 0 170 17"><g transform="translate(0 8)">
      <g fill="none" stroke="#3a5a7a"><path d="M2-5h10v10H2zM2-2h10M2 2h10M5.500-5v10M9-5v10"/></g>
      <g fill="none" stroke="#2a6ac8"><path d="M18-5h10v10H18zM18-2h10M18 2h10M21.500-5v10M25-5v10"/></g>
      <path d="M32-5V5H42" fill="none" stroke="#3a7fb8"/>
      <rect x="47" y="-7" width="15" height="15" fill="#cfe0f2" stroke="#8ab0d8"/><circle cx="54.500" cy=".5" r="5" fill="none" stroke="#556"/><path d="M54.500 .5h5" stroke="#e06020"/>
      <rect x="63" y="-7" width="15" height="15" fill="#cfe0f2" stroke="#8ab0d8"/><rect x="66" y="-4" width="9" height="9" fill="#fff" stroke="#445"/><rect x="65" y="-5" width="3" height="3" fill="#e06020"/>
      <rect x="79" y="-7" width="15" height="15" fill="#cfe0f2" stroke="#8ab0d8"/><path d="M81 5H92M81 5L90-4" fill="none" stroke="#556"/>
      <rect x="95" y="-7" width="15" height="15" fill="#cfe0f2" stroke="#8ab0d8"/><path d="M97 5H108M97 5L106-4" fill="none" stroke="#556"/><circle cx="105" cy="-3" r="2" fill="#f0b020"/>
      <rect x="111" y="-7" width="15" height="15" fill="#cfe0f2" stroke="#8ab0d8"/><path d="M114 0h5M116.500-3V3M120 4h4" fill="none" stroke="#445" stroke-width="1.200"/>
      <rect x="127" y="-7" width="15" height="15" fill="#cfe0f2" stroke="#8ab0d8"/><path d="M129-2h11M129 1h11M129 4h11" stroke="#333" stroke-width="1.400"/>
      <path d="M147-4h3M148.500-6v4M149-1h6v6" fill="none" stroke="#447"/><rect x="152" y="1" width="4" height="4" fill="#fff" stroke="#3a7fb8"/>
    </g></svg>
    <span class="statright">
      <svg class="sico" viewBox="-8 -8 16 16"><use href="#A"/></svg><span class="scale">1:1</span><span class="sarrow"></span>
      <svg class="sico" viewBox="-8 -8 16 16"><use href="#A"/><circle cx="5" cy="5" r="2" fill="#f0b020"/></svg>
      <svg class="sico gap2" viewBox="-8 -8 16 16"><use href="#A"/><path d="M-5-2h10" stroke="#4a82c0"/></svg>
      <svg class="sico" viewBox="-8 -8 16 16"><circle r="4.500" fill="none" stroke="#3a82c0" stroke-width="2.500"/><circle r="6" fill="none" stroke="#3a82c0" stroke-width="1.500" stroke-dasharray="2 2.700"/></svg>
      <svg class="sico gap2" viewBox="-8 -8 16 16"><path d="M-7-3V-7H-3M3-7H7V-3M7 3V7H3M-3 7H-7V3M-6-6l3 3M6-6L3-3M6 6L3 3M-6 6l3-3" fill="none" stroke="#778"/></svg>
    </span>
  </footer>

  <div class="ime">
    <svg class="imes" viewBox="0 0 24 24"><rect x="2" y="2" width="20" height="20" rx="4" transform="rotate(-12 12 12)" fill="#3dbb1f"/><path d="M17 8c-2-2-9-2-10 0s10 4 10 8-8 3-10 1" fill="none" stroke="#fff" stroke-width="2.600"/></svg>
    <span class="imet">五</span>
    <svg class="imeg" viewBox="0 0 14 14"><path d="M9 1a6 6 0 1 1-8 7c4 2 9 0 8-7z" fill="#3c4450"/></svg>
    <svg class="imeg" viewBox="0 0 14 14"><circle cx="3" cy="4" r="1.500" fill="none" stroke="#3c4450"/><path d="M11 5c2 0 1 3-1 5" fill="none" stroke="#3c4450" stroke-width="2"/></svg>
    <svg class="imeg wide" viewBox="0 0 14 10"><rect x=".5" y=".5" width="13" height="9" rx="1" fill="none" stroke="#3c4450"/><path d="M2 3h10M2 5h10" stroke="#3c4450" stroke-dasharray="1 1"/><path d="M4 7.500h6" stroke="#3c4450"/></svg>
    <svg class="imeg" viewBox="0 0 14 14"><circle cx="7" cy="4" r="3" fill="#3c4450"/><path d="M1 12c0-5 12-5 12 0z" fill="#3c4450"/></svg>
    <svg class="imeg" viewBox="0 0 14 14"><g fill="#3c4450"><circle cx="4" cy="4" r="3"/><circle cx="10" cy="4" r="3"/><circle cx="4" cy="10" r="3"/><circle cx="10" cy="10" r="3"/></g></svg>
  </div>
</div>
</body>
</html>
```
FILE: styles.css
```css
* { box-sizing: border-box; }
html, body { margin: 0; padding: 0; }
body {
  width: 1268px; height: 680px; overflow: hidden;
  background: #f0f0f0; color: #1e1e1e;
  font: 9.6px "Noto Sans CJK SC", "Noto Sans", sans-serif;
}
.defs { position: absolute; width: 0; height: 0; }
.app { position: relative; display: flex; flex-direction: column; width: 1268px; height: 680px; }

.titlebar { display: flex; align-items: center; height: 19px; background: #fff; flex: none; }
.logo { width: 14px; height: 16px; margin-left: 2px; flex: none; }
.apptitle { margin-left: 2px; font-size: 10px; white-space: pre; color: #222; width: 1051px; flex: none; }
.pill { width: 47px; height: 8px; margin-top: -10px; flex: none; }
.winbtn { width: 12px; height: 12px; flex: none; }
.pill + .winbtn { margin-left: 47px; }
.winbtn + .winbtn { margin-left: 26px; }
.winbtn:last-child { margin-left: 27px; }

.menubar { display: flex; height: 16px; flex: none; align-items: center; position: relative; }
.m { flex: none; font-size: 9.8px; color: #222; }
.m1 { margin-left: 9px; width: 50px; }
.m2, .m3 { width: 51px; }
.m4 { width: 46px; }
.m5 { width: 53px; }
.m6 { width: 50px; }
.m7, .m8 { width: 51px; }
.m9 { width: 56px; }
.m10 { width: 73px; }
.m11 { width: 54px; }
.m12 { width: 50px; }
.m13 { width: 41px; }

.row { display: flex; height: 18px; flex: none; position: relative; border-top: 1px solid transparent; }
.row::before { content: ""; position: absolute; left: 0; top: -1px; height: 2px; background: #c6c6c6; }
.r1::before { width: 722px; }
.r2::before { width: 668px; }
.r3::before { width: 725px; }
.r4::before { width: 872px; }
.r5::before { width: 1225px; }
.strip { display: block; height: 17px; flex: none; opacity: .82; }
.w388 { width: 391px; }
.w21 { width: 22px; }
.w20 { width: 21px; }
.w22 { width: 22px; }
.w23 { width: 23px; }
.w56 { width: 56px; }
.w6 { width: 6px; }
.w8 { width: 8px; }
.wrow { width: 1268px; }

.combo { display: flex; align-items: center; height: 15px; margin-top: 1px; background: #fff; flex: none; padding-left: 3px; position: relative; color: #444; }
.combo::after { content: ""; position: absolute; right: 4px; top: 6px; border: 3.500px solid transparent; border-top: 4px solid #222; border-bottom: 0; }
.mono { font: 10.300px "Liberation Mono", monospace; }
.c-std1 { width: 70px; }
.c-iso { width: 66px; }
.c-std2 { width: 66px; }
.c-layer { width: 197px; padding-left: 1px; gap: 1px; color: #222; }
.lico { width: 10px; height: 12px; flex: none; margin-right: 1px; }
.colorbox { width: 8px; height: 8px; border: 1px solid #222; background: #fff; display: inline-block; margin-right: 3px; flex: none; }
.zero { font-size: 9.500px; }
.c-color { width: 102px; padding-left: 4px; font-size: 10.500px; color: #333; }
.c-ltype { width: 113px; padding-left: 4px; font-size: 10.500px; color: #333; }
.c-lw { width: 80px; padding-left: 4px; font-size: 10.500px; color: #333; }
.ltline { width: 32px; height: 1px; background: #222; margin-right: 2px; flex: none; }
.ltline.short { width: 24px; }
.c-dis { width: 60px; background: #f0f0f0; border: 1px solid #d0d0d0; color: #999; padding-left: 3px; font-size: 9.800px; }
.c-dis::after { display: none; }
.disarrow { width: 0; height: 0; margin: 6px 0 0 6px; border: 3.500px solid transparent; border-top: 4px solid #aaa; border-bottom: 0; }

.body { display: flex; flex: none; height: 538px; }
.leftpane { width: 1052px; display: flex; flex-direction: column; flex: none; }
.workspace { display: flex; height: 463px; flex: none; }
.sidebar { flex: none; height: 463px; }
.sidebar.left { width: 20px; border-left: 1px solid #bbb; height: 285px; }
.sidebar.right { width: 22px; }
.vstrip { display: block; width: 100%; height: 360px; opacity: .85; }

.mdi { width: 1010px; flex: none; display: flex; flex-direction: column; }
.doctabs { display: flex; height: 19px; background: #6b6b6b; flex: none; align-items: stretch; }
.tabdrop { width: 8px; background: #eee; position: relative; }
.tabdrop::after { content: ""; position: absolute; left: 1px; top: 6px; border: 3px solid transparent; border-top: 5px solid #111; border-bottom: 0; }
.doctab { width: 115px; background: #c8d5e0; display: flex; align-items: center; padding-left: 2px; flex: none; }
.docico { width: 11px; height: 12px; flex: none; }
.docname { font: bold 8.500px "Noto Sans CJK SC", "Liberation Serif", serif; margin-left: 1px; color: #222; width: 78px; white-space: nowrap; overflow: hidden; }
.docx { font-size: 8px; font-weight: bold; margin-left: 13px; color: #111; }
.docplus { width: 16px; margin-left: 2px; background: #aaa; display: flex; align-items: center; justify-content: center; }
.docplus svg { width: 12px; height: 9px; }

.canvas { position: relative; flex: none; height: 431px; background: #22272f; overflow: hidden; }
.drawing { display: block; width: 1010px; height: 431px; }
.mdibtns { position: absolute; right: 8px; top: 4px; display: flex; align-items: center; gap: 6px; color: #e8e8e8; }
.mdimin { width: 7px; height: 2px; margin-top: 6px; background: #e8e8e8; }
.mdimax { width: 7px; height: 7px; border: 2px solid #e8e8e8; }
.mdix { font-size: 8px; font-weight: bold; }

.fr { fill: none; stroke: #c4c4c4; stroke-width: 3; }
.wb, .wb2, .wr, .wr2, .wd { fill: none; }
.wb { stroke: #0a0ae8; stroke-width: 3.500; }
.wb2 { stroke: #0a0ae8; stroke-width: 4.500; }
.wr { stroke: #e80808; stroke-width: 3.500; }
.wr2 { stroke: #e80808; stroke-width: 4.500; }
.wd { stroke: #7a1414; stroke-width: 3.500; }
.st { stroke: #fff; stroke-width: 6; fill: none; }
.tl { stroke: #9a9a9a; stroke-width: 2; fill: none; }
.paperline { fill: none; stroke: #dcdcdc; }
.cursor { fill: none; stroke: #c8ccd0; }
.ucs { fill: none; stroke: #d4d6d8; }
.ucst { font: 14.500px "Liberation Sans", sans-serif; fill: #d4d6d8; stroke: none; }

.layouttabs { display: flex; height: 13px; flex: none; background: #f0f0f0; align-items: stretch; }
.ltnav { width: 11.500px; border-right: 1px solid #aaa; position: relative; flex: none; }
.ltnav.up { width: 20px; background: #eee; }
.ltnav::after { content: ""; position: absolute; left: 3px; top: 3px; border: 3.500px solid transparent; }
.ltnav.up::after { left: 6px; border-bottom: 4px solid #111; border-top: 0; top: 4px; }
.ltnav.first::after, .ltnav.prev::after { border-right: 4px solid #777; border-left: 0; }
.ltnav.next::after, .ltnav.last::after { border-left: 4px solid #777; border-right: 0; }
.lt { width: 46px; display: flex; align-items: center; justify-content: center; border-right: 1px solid #888; font-size: 10.500px; color: #333; background: #f4f4f4; flex: none; }
.lt.l2 { width: 45px; }
.lt.active { width: 41px; background: #9c9c9c; font-weight: bold; color: #222; }
.lt.plus { width: 27px; font-weight: bold; font-size: 11px; }

.cmd { display: flex; height: 73px; margin-top: 2px; margin-right: 4px; border: 1px solid #8a8a8a; flex: none; background: #fff; }
.cmdx { width: 15px; background: #f0f0f0; text-align: center; font-size: 8px; font-weight: bold; line-height: 10px; padding-top: 1px; color: #111; flex: none; }
.cmdmain { flex: 1; display: flex; flex-direction: column; font: 10.500px "Liberation Sans", "Noto Sans CJK SC", sans-serif; color: #333; }
.cmdlog { height: 56px; border-bottom: 3px solid #f2f2f2; flex: none; }
.cline { height: 12px; line-height: 12px; white-space: pre; }
.ascii { font: 9.170px "Liberation Mono", monospace; white-space: pre; }
.cmdline { display: flex; align-items: center; flex: 1; }
.caret { width: 1px; height: 12px; background: #333; margin-left: 2px; }
.scroll { width: 11px; height: 56px; display: flex; flex-direction: column; border: 1px solid #888; border-right: 0; flex: none; }
.sb { height: 13px; background: #fff; flex: none; position: relative; border: 1px solid #777; }
.sb::after { content: ""; position: absolute; left: 2px; top: 3px; width: 4px; height: 4px; border-left: 1px solid #333; border-top: 1px solid #333; transform: rotate(45deg); }
.sb.down::after { transform: rotate(225deg); top: 0; }
.sbthumb { height: 22px; background: #c2c2c2; flex: none; }
.sbtrack { flex: 1; background: #fff; }

.palette { width: 216px; flex: none; display: flex; flex-direction: column; border-left: 2px solid #8c8c8c; border-right: 1px solid #8c8c8c; height: 538px; border-bottom: 1px solid #8c8c8c; background: #fff; }
.palhead { display: flex; align-items: center; height: 18px; background: #9c9c9c; flex: none; border-top: 1px solid #808080; }
.palcap { width: 15px; height: 100%; background: #666; flex: none; }
.paltitle { margin-left: 12px; font-size: 10.500px; color: #2c2c2c; flex: 1; }
.palx { font-size: 8px; font-weight: bold; color: #111; margin-right: 8px; }
.palbody { display: flex; flex: 1; min-height: 0; }
.paltabs { width: 15px; background: #c2c2c2; display: flex; flex-direction: column; flex: none; }
.ptab { height: 74px; writing-mode: vertical-rl; text-orientation: sideways; transform: rotate(180deg); display: flex; align-items: center; justify-content: center; line-height: 15px; font-size: 10px; color: #222; border-bottom: 1px solid #8c8c8c; flex: none; overflow: hidden; }
.ptab.active { background: #f2f2f2; }
.palitems { list-style: none; margin: 0; padding: 5px 0 0 9px; flex: 1; }
.palitems li { display: flex; align-items: center; height: 27.700px; font: 10px "Noto Sans", "Noto Sans CJK SC", sans-serif; color: #2c3238; }
.pico { width: 20px; height: 22px; margin-right: 2px; flex: none; }
.pgrey { width: 17px; height: 17px; background: #bdbdbd; border-radius: 3px; margin: 0 4px 0 1px; flex: none; }

.status { display: flex; align-items: center; height: 17px; flex: none; background: #eeeaea; }
.url { width: 87px; padding-left: 2px; font: 8.800px "Liberation Sans", sans-serif; color: #222; flex: none; white-space: nowrap; }
.coords { width: 182px; height: 16px; border-bottom: 1px solid #999; font: 8.800px/15px "Liberation Sans", sans-serif; color: #333; flex: none; }
.wstat { width: 170px; margin-left: 3px; }
.statright { display: flex; align-items: center; margin-left: 728px; }
.sico { width: 14px; height: 14px; flex: none; }
.scale { font: 8.500px "Liberation Sans", sans-serif; color: #888; margin-left: 1px; width: 11px; }
.sarrow { border: 3.500px solid transparent; border-top: 4px solid #222; border-bottom: 0; margin: 0 4px 0 0; }
.gap2 { margin: 0 0 0 2px; }

.ime { position: absolute; left: 803px; top: 658px; width: 135px; height: 21px; display: flex; align-items: center; background: #eef3f8; border: 1px solid #c6d4e4; border-left: 0; border-radius: 0 3px 3px 0; }
.imes { width: 24px; height: 24px; margin: -2px 5px 0 -2px; flex: none; }
.imet { font-size: 13px; font-weight: 500; color: #3c4450; margin-right: 4px; }
.imeg { width: 13px; height: 13px; margin-right: 5px; flex: none; }
.imeg.wide { width: 15px; }
```
